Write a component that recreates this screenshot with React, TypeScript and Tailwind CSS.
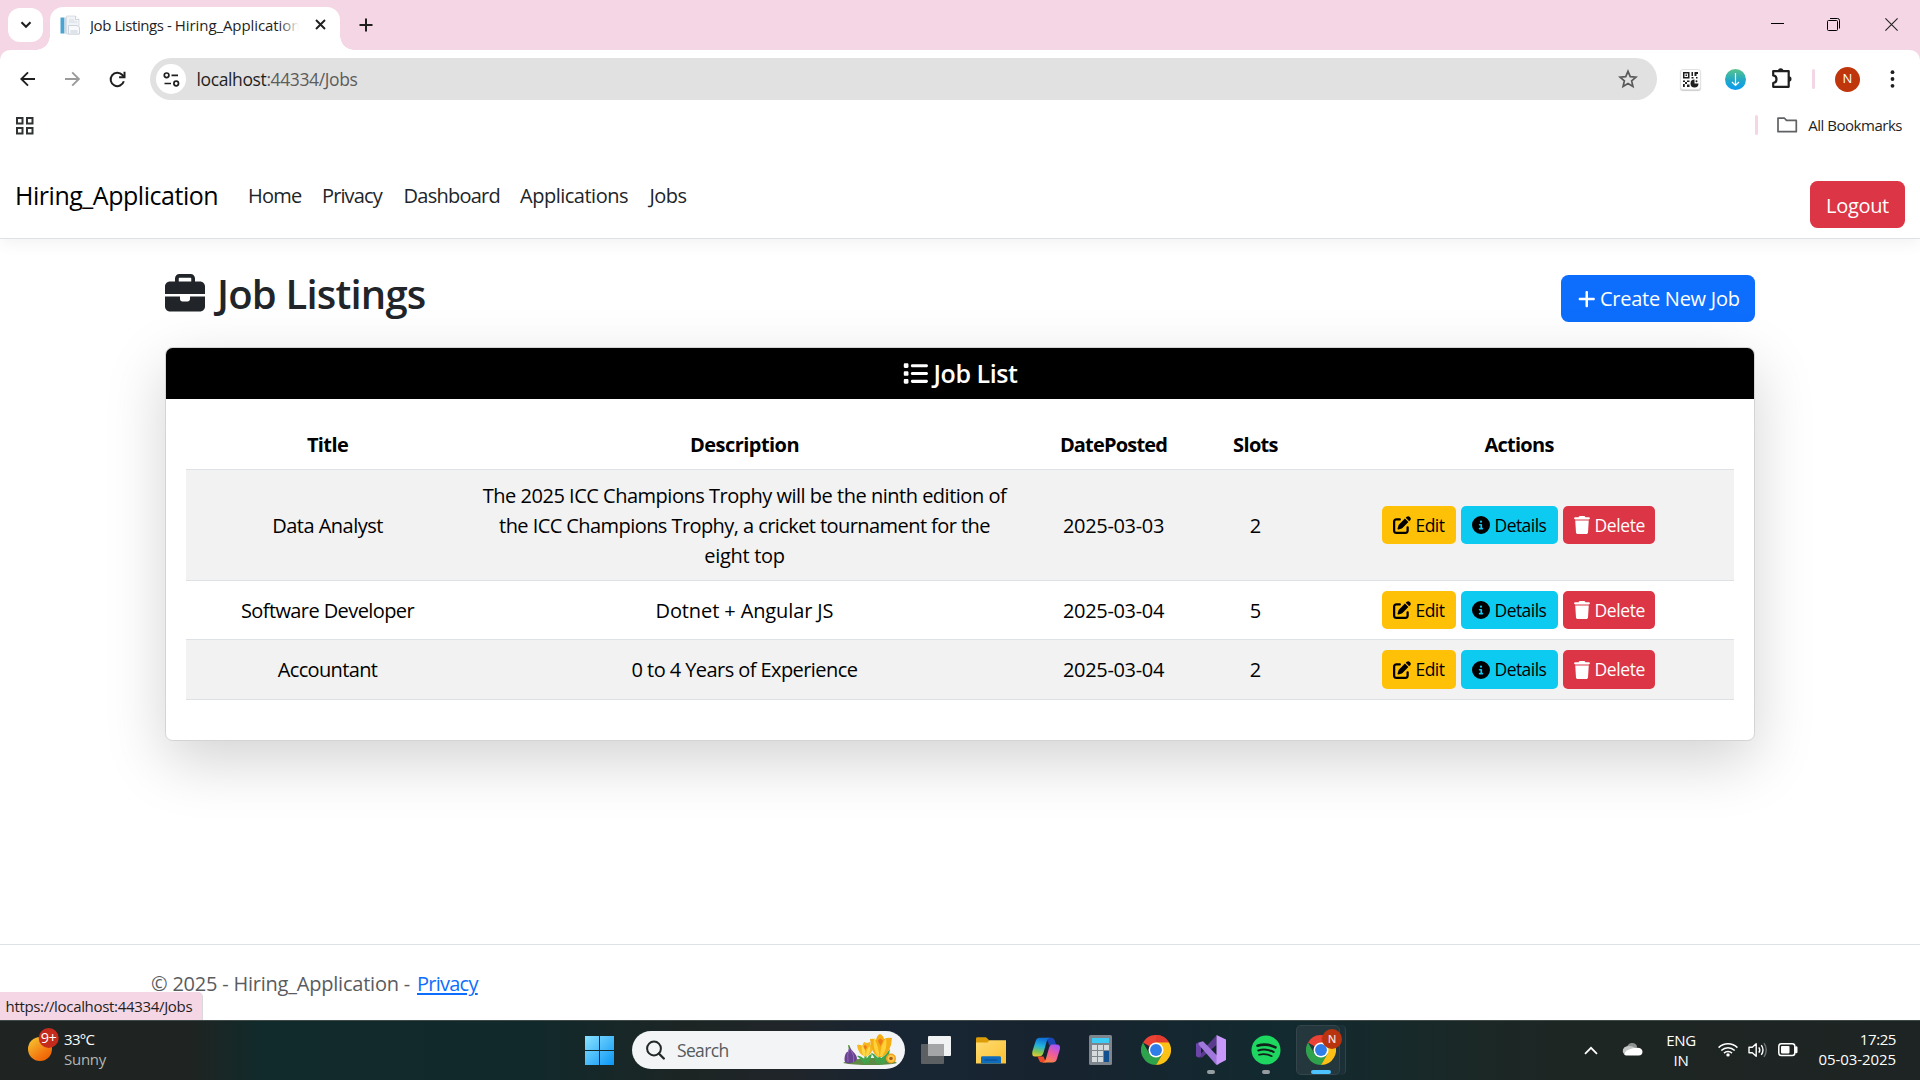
import React from "react";
import { FaBriefcase, FaCircleInfo, FaList, FaPenToSquare, FaPlus, FaTrash } from "react-icons/fa6";

function TabStrip() {
  return (
    <div className="flex h-[50px] bg-[#f5d6e4]">
      <button className="mt-2 ml-2 flex h-[34px] w-[35px] items-center justify-center rounded-[12px] bg-white">
        <svg width="12" height="8" viewBox="0 0 12 8" fill="none" stroke="#1f1f1f" strokeWidth="2.1" className="mb-px">
          <path d="M1.5 1.3 6 5.8l4.500-4.500" />
        </svg>
      </button>
      <div className="relative mt-[7px] ml-[7px] flex w-[290px] items-center rounded-t-[13px] bg-white pb-[8px]">
        <span className="absolute bottom-0 -left-[14px] h-[14px] w-[14px] bg-[radial-gradient(circle_at_0_0,transparent_13.500px,white_14px)]" />
        <span className="absolute -right-[14px] bottom-0 h-[14px] w-[14px] bg-[radial-gradient(circle_at_100%_0,transparent_13.500px,white_14px)]" />
        <svg width="20" height="20" viewBox="0 0 20 20" className="ml-[10px]">
          <rect x="0.500" y="2.500" width="4" height="16" fill="#4aa3d0" />
          <rect x="4.500" y="2.500" width="1.500" height="16" fill="#c4dcea" />
          <path d="M6.500 1h9l3.500 3.500V19H6.500z" fill="#f1f3f6" stroke="#d3d8df" strokeWidth="0.800" />
          <path d="M15.500 1v3.500H19" fill="#fff" stroke="#c3cad3" strokeWidth="0.800" />
          <path d="M9 5h5M9 7h8" stroke="#d3dae2" strokeWidth="0.900" />
          <path d="M8.500 10.500h8.500l2.500 2V19h-11z" fill="#f8f9fb" stroke="#c4cbd5" strokeWidth="0.800" />
          <path d="M10.500 15h7v3.500h-7z" fill="#dde3ea" />
        </svg>
        <div className="relative ml-[10px] w-[209px] overflow-hidden text-[15px] leading-[22px] whitespace-nowrap text-[#1f1f1f]">
          <span className="tracking-[-0.420px]">Job Listings - </span>
          <span className="tracking-[-0.080px]">Hiring_Application</span>
          <span className="absolute inset-y-0 right-0 w-5 bg-linear-to-r from-white/0 to-white" />
        </div>
        <svg width="11" height="11" viewBox="0 0 11 11" stroke="#1f1f1f" strokeWidth="1.900" className="ml-[15.500px]">
          <path d="M1 1l9 9M10 1l-9 9" />
        </svg>
      </div>
      <svg width="14" height="14" viewBox="0 0 14 14" stroke="#1f1f1f" strokeWidth="2" className="mt-[18px] ml-[19px]">
        <path d="M7 0.500v13M0.500 7h13" />
      </svg>
      <div className="ml-auto flex pt-[18px] pr-[22px]">
        <svg width="13" height="13" viewBox="0 0 13 13" stroke="#000" strokeWidth="1">
          <path d="M0 5.500h13" />
        </svg>
        <svg width="13" height="13" viewBox="0 0 13 13" fill="none" stroke="#000" strokeWidth="1" className="ml-[43px]">
          <rect x="0.500" y="2.500" width="10" height="10" rx="1" />
          <path d="M3 0.500h7.500a2 2 0 0 1 2 2V10.500" />
        </svg>
        <svg width="13" height="13" viewBox="0 0 13 13" stroke="#222" strokeWidth="1.100" className="ml-[45px]">
          <path d="M0.400 0.400l12.200 12.200M12.600 0.400 0.400 12.600" />
        </svg>
      </div>
    </div>
  );
}

function Toolbar() {
  return (
    <div className="relative z-10 bg-[#f5d6e4]">
      <div className="flex h-[58px] items-center rounded-t-[10px] bg-white">
        <svg width="16" height="16" viewBox="0 0 16 16" fill="none" stroke="#1f1f1f" strokeWidth="1.900" className="ml-5">
          <path d="M15 8H1.500M8 1.300 1.300 8l6.700 6.700" />
        </svg>
        <svg width="16" height="16" viewBox="0 0 16 16" fill="none" stroke="#9b9b9b" strokeWidth="1.900" className="ml-[29px]">
          <path d="M0 8h13.700M7.200 1.300 13.900 8l-6.700 6.700" />
        </svg>
        <svg width="17" height="17" viewBox="0 0 17 17" fill="none" stroke="#1f1f1f" strokeWidth="2" className="mr-px ml-[28px]">
          <path d="M14.800 10.200A6.700 6.700 0 1 1 13.400 4L15 5.700" />
          <path d="M15.500 0.800v5.400h-5.400" />
        </svg>
        <div className="ml-[23px] flex h-[42px] w-[1507px] items-center rounded-full bg-[#e1e1e1]">
          <div className="ml-[6px] flex h-[30px] w-[30px] items-center justify-center rounded-full bg-white">
            <svg width="17" height="15" viewBox="0 0 17 15" fill="none" stroke="#1f1f1f" strokeWidth="1.700">
              <circle cx="3.600" cy="3.300" r="2.300" />
              <path d="M8.500 3.300h6.500M1.500 11.500h6.500" />
              <circle cx="13.200" cy="11.500" r="2.300" />
            </svg>
          </div>
          <div className="ml-[10.500px] text-[17.5px] leading-6 tracking-[-0.380px] text-[#1f1f1f]">
            localhost<span className="text-[#5c5c5c]">:44334/Jobs</span>
          </div>
          <svg width="20" height="20" viewBox="0 0 20 20" fill="none" stroke="#5a5a5a" strokeWidth="1.700" strokeLinejoin="miter" className="mr-[19px] ml-auto">
            <path d="M10 2.300l2.250 5.300 5.750.5-4.360 3.780 1.310 5.620L10 14.500l-4.950 3 1.310-5.620L2 8.100l5.750-.5z" />
          </svg>
        </div>
        <div className="ml-[23px] flex h-[21px] w-[21px] items-center justify-center rounded-[3px] border border-[#e2e2e2] bg-white shadow-[0_1px_1px_#ccc]">
          <svg width="17" height="17" viewBox="0 0 17 17" fill="#1f1f1f" className="shrink-0">
            <path d="M1 1h6.500v6.500H1zM2.500 2.500v3.500H6V2.500z" fillRule="evenodd" />
            <path d="M3.500 3.500h1.600v1.600H3.500zM9.500 1H11v4H9.500zM12.500 1H16v2h-1.500v2h-2zM9.500 6h2v1.500h-2zM14 6h1.500v1.500H14zM1 9.500h2V11H1zM5 9.500h2.500v1.500H5zM3 11h2v2H3zM1 13h1.800v3H1zM5 13.500h2.500V16H5z" />
            <path d="M12.500 8.500v4H16.500a4 4 0 1 1-4-4z" />
            <circle cx="14.500" cy="10.300" r="1" />
          </svg>
        </div>
        <svg width="21" height="21" viewBox="0 0 21 21" className="ml-6">
          <defs>
            <linearGradient id="dl" x1="0" y1="0" x2="0" y2="1">
              <stop offset="0" stopColor="#5bc48b" />
              <stop offset="0.550" stopColor="#1fa8c8" />
              <stop offset="1" stopColor="#0a9bf5" />
            </linearGradient>
          </defs>
          <circle cx="10.500" cy="10.500" r="10.500" fill="url(#dl)" />
          <path d="M10.500 4v12.500M7 13l3.500 3.500L14 13" stroke="#fff" strokeWidth="1.200" fill="none" />
        </svg>
        <svg width="21" height="21" viewBox="0 0 21 21" className="mb-[2px] ml-[25px]">
          <path d="M2.200 3.200h15.500v15.600H2.200V15c2.200-.3 3.300-1.900 3.300-3.800S4.400 7.700 2.200 7.400z" fill="none" stroke="#1f1f1f" strokeWidth="2.200" strokeLinejoin="round" />
          <path d="M7 3a2.700 2.700 0 0 1 5.400 0zM17.800 8.300a2.700 2.700 0 0 1 0 5.400z" fill="#1f1f1f" />
        </svg>
        <span className="ml-5 h-5 w-[3px] rounded-full bg-[#f5d6e4]" />
        <span className="ml-5 flex h-[25px] w-[25px] items-center justify-center rounded-full bg-[#bf360c] text-[13px] text-white">N</span>
        <svg width="5" height="18" viewBox="0 0 5 18" fill="#1f1f1f" className="ml-[30px]">
          <circle cx="2.500" cy="2.200" r="1.900" />
          <circle cx="2.500" cy="9" r="1.900" />
          <circle cx="2.500" cy="15.800" r="1.900" />
        </svg>
      </div>
      <div className="flex h-[42px] items-start bg-white pt-2">
        <svg width="18" height="18" viewBox="0 0 18 18" fill="none" stroke="#303333" strokeWidth="2" className="mt-[0.500px] ml-4">
          <path d="M1 1h5.500v5.500H1zM11 1h5.500v5.500H11zM1 11h5.500v5.500H1zM11 11h5.500v5.500H11z" />
        </svg>
        <span className="mt-[-1px] ml-auto h-5 w-[3px] rounded-full bg-[#f5d6e4]" />
        <svg width="21" height="16" viewBox="0 0 21 16" fill="none" stroke="#5f6163" strokeWidth="1.700" strokeLinejoin="round" className="mt-px ml-[19px]">
          <path d="M1 1.200h6.500l2 2.200h9.800v11.300H1z" />
        </svg>
        <span className="mt-[-2px] mr-[18px] ml-[10px] text-[15px] leading-[22px] tracking-[-0.480px] text-[#1f1f1f]">All Bookmarks</span>
      </div>
    </div>
  );
}

function SiteHeader() {
  return (
    <header className="flex h-[89px] items-center border-b border-[#dee2e6] bg-white pt-[3px] pr-[15px] pl-[15px] text-[20px] text-[#212529] shadow-[0_5px_15px_rgba(0,0,0,0.05)]">
      <span className="w-[233px] pb-px text-[25px] leading-8 tracking-[-0.470px] text-black">Hiring_Application</span>
      <span className="w-[74px] tracking-[-0.760px]">Home</span>
      <span className="w-[81.500px] tracking-[-0.880px]">Privacy</span>
      <span className="w-[116.500px] tracking-[-0.740px]">Dashboard</span>
      <span className="w-[129.500px] tracking-[-0.490px]">Applications</span>
      <span className="tracking-[-0.550px]">Jobs</span>
      <button className="mb-[10px] ml-auto flex h-[47px] w-[95px] items-center justify-center self-end rounded-[7.5px] bg-[#dc3545] pt-[2px] tracking-[-0.330px] text-white">
        Logout
      </button>
    </header>
  );
}

const jobs = [
  { title: "Data Analyst", date: "2025-03-03", slots: 2 },
  { title: "Software Developer", date: "2025-03-04", slots: 5 },
  { title: "Accountant", date: "2025-03-04", slots: 2 },
];

function Description({ row }: { row: number }) {
  if (row === 0)
    return (
      <div className="leading-[30px] whitespace-nowrap">
        <div className="tracking-[-0.490px]">The 2025 ICC Champions Trophy will be the ninth edition of</div>
        <div className="tracking-[-0.570px]">the ICC Champions Trophy, a cricket tournament for the</div>
        <div className="tracking-[-0.300px]">eight top</div>
      </div>
    );
  if (row === 1) return <span className="tracking-[-0.110px]">Dotnet + Angular JS</span>;
  return <span className="tracking-[-0.570px]">0 to 4 Years of Experience</span>;
}

const rowStyles = ["h-[111px] bg-[#f2f2f2]", "h-[59px]", "h-[60px] bg-[#f2f2f2]"];
const textStyles = ["pt-[2px]", "pt-[2px]", "pt-0"];
const buttonStyles = ["h-[38px]", "h-[38px]", "h-[39px]"];
const titleTracking = ["tracking-[-0.520px]", "tracking-[-0.590px]", "tracking-[-0.650px]"];

function JobTable() {
  return (
    <table className="w-[1548px] table-fixed border-separate border-spacing-0 text-center text-[20px] text-black [&_td]:border-b [&_td]:border-[#dee2e6] [&_th]:border-b [&_th]:border-[#dee2e6] [&_th]:pt-[2px]">
      <colgroup>
        <col className="w-[283px]" />
        <col className="w-[551px]" />
        <col className="w-[187px]" />
        <col className="w-[97px]" />
        <col className="w-[430px]" />
      </colgroup>
      <thead>
        <tr className="h-[51px] font-bold">
          <th className="tracking-[-0.620px]">Title</th>
          <th className="tracking-[-0.540px]">Description</th>
          <th className="tracking-[-0.820px]">DatePosted</th>
          <th className="tracking-[-0.670px]">Slots</th>
          <th className="tracking-[-0.730px]">Actions</th>
        </tr>
      </thead>
      <tbody>
        {jobs.map((job, i) => (
          <tr key={job.title} className={rowStyles[i]}>
            <td className={textStyles[i] + " " + titleTracking[i]}>{job.title}</td>
            <td className={textStyles[i]}>
              <Description row={i} />
            </td>
            <td className={"tracking-[-0.320px] " + textStyles[i]}>{job.date}</td>
            <td className={textStyles[i]}>{job.slots}</td>
            <td>
              <div className="flex justify-center gap-[5px] pr-[2px] text-[17.5px]">
                <button className={"flex w-[74px] items-center rounded-[5px] bg-[#ffc107] pl-[11px] tracking-[-0.550px] " + buttonStyles[i]}>
                  <FaPenToSquare className="mr-[5px] h-[18px] w-[18px]" />
                  Edit
                </button>
                <button className={"flex w-[97px] items-center rounded-[5px] bg-[#0dcaf0] pl-[11px] tracking-[-0.550px] " + buttonStyles[i]}>
                  <FaCircleInfo className="mr-[5px] h-[18px] w-[18px]" />
                  Details
                </button>
                <button className={"flex w-[92px] items-center rounded-[5px] bg-[#dc3545] pl-[11px] tracking-[-0.400px] text-white " + buttonStyles[i]}>
                  <FaTrash className="mr-[5px] h-[18px] w-4" />
                  Delete
                </button>
              </div>
            </td>
          </tr>
        ))}
      </tbody>
    </table>
  );
}

function PageBody() {
  return (
    <main className="flex h-[705px] flex-col px-[165px] pt-9">
      <div className="flex h-[72px] items-start justify-between">
        <h2 className="mt-px flex h-[36px] items-center text-[40px] font-semibold tracking-[-0.800px] text-[#212529]">
          <FaBriefcase className="mr-[12px] h-10 w-10" />
          Job Listings
        </h2>
        <button className="flex h-[47px] w-[194px] items-center rounded-[7.5px] bg-[#0d6efd] pl-[17px] text-[20px] tracking-[-0.260px] text-white">
          <FaPlus className="mr-[4.500px] h-5 w-[17.5px]" />
          Create New Job
        </button>
      </div>
      <section className="h-[394px] w-[1590px] rounded-[7.5px] border border-[#d3d4d4] bg-white shadow-[0_20px_60px_rgba(0,0,0,0.175)]">
        <h5 className="flex h-[51px] items-center justify-center rounded-t-[6.5px] bg-black text-[25px] font-semibold tracking-[-0.450px] text-white">
          <FaList className="mr-[6px] h-[25px] w-[25px]" />
          Job List
        </h5>
        <div className="p-5">
          <JobTable />
        </div>
      </section>
    </main>
  );
}

function PageFooter() {
  return (
    <footer className="relative flex h-[76px] items-start border-t border-[#dee2e6] bg-white pt-6 pl-[151px] text-[20px] leading-[30px] text-[#595c5f]">
      <span className="w-[266px] tracking-[-0.220px]">© 2025 - Hiring_Application -</span>
      <a className="tracking-[-0.750px] text-[#0d6efd] underline underline-offset-2">Privacy</a>
      <div className="absolute bottom-0 left-0 h-7 w-[203px] rounded-tr-[5px] border-r border-[#d9d9dc] bg-[#f5d6e4] pl-[5.500px] text-[15px] leading-[28px] tracking-[-0.320px] text-[#1f1f1f]">
        https://localhost:44334/Jobs
      </div>
    </footer>
  );
}

function ChromeIcon() {
  return (
    <svg width="30" height="30" viewBox="0 0 48 48">
      <path d="M24 24 3.200 12A24 24 0 0 1 44.800 12z" fill="#ea4335" />
      <path d="M24 0A24 24 0 0 1 44.800 12H24z" fill="#e33b2e" />
      <path d="M3.200 12A24 24 0 0 0 24 48L34.400 30 24 24 13.600 30z" fill="#2fa24c" />
      <path d="M44.800 12A24 24 0 0 1 24 48L34.400 30 24 12z" fill="#fbc116" />
      <circle cx="24" cy="24" r="12" fill="#fff" />
      <circle cx="24" cy="24" r="9.500" fill="#2f7de9" />
    </svg>
  );
}

function Flowers() {
  return (
    <svg width="56" height="32" viewBox="0 0 56 32">
      <path d="M0 29Q6 25 28 24Q48 23 54 29Q46 31 28 31T0 29z" fill="#5f8a45" />
      <path d="M6 11q1.500 4 4 6.500 4 4 4 7T7.500 29 1.500 24.500 5 17.500Q6.500 15 6 11z" fill="#6a4292" />
      <path d="M6 15q-2 5-1 13M8 16q4 6 2.500 12" stroke="#9a72bd" fill="none" strokeWidth="0.800" />
      <path d="M5.500 11l.8 5" stroke="#5f9a45" strokeWidth="1" />
      <path d="M22 26q-5-5-8-4 5 4 8 9zM23 26q3-6 6-6-1 5-4 10zM36 25q-6-7-8-6 5 6 6 12zM37 25q6-4 10-10-1 11-8 16z" fill="#3fa44a" />
      <path d="M22.500 20v10M36.500 21v9" stroke="#3fa44a" strokeWidth="2.200" />
      <path d="M14 11q3-1 5 1l2-4 3 1 3-1 1 4h2q0 8-7.500 11Q15 20 14 11z" fill="#f6b820" />
      <path d="M20.500 22q-3-6-1-11 3 4 3 11zM24.500 22q4-5 2-10-3 3-3.500 10z" fill="#ffd84a" />
      <path d="M20.500 13q1.500-4 3.500 0l-1.500 3z" fill="#ef7b1a" />
      <path d="M27 5q4-1 6 1 1-5 4-6 3 1 4 5 4-2 8-1-1 15-10 19h-4Q28 19 27 5z" fill="#f5ad12" />
      <path d="M35 22.500Q29 14 31 4q4 6 5.500 18zM39 22.500q6-8 4-18.500-5 6-6 18z" fill="#ffd23d" />
      <path d="M35 7q2-5 5 0l-2.500 5z" fill="#ef7b1a" />
      <circle cx="48" cy="24.500" r="5" fill="#f0a321" />
      <circle cx="48" cy="24.500" r="3.500" fill="#ffc94a" />
      <circle cx="48" cy="24.500" r="1.800" fill="#a8611c" />
    </svg>
  );
}

function Taskbar() {
  return (
    <div className="flex h-[60px] items-start border-t border-[#3f4a48] bg-[linear-gradient(90deg,#1f2422_0px,#1f2422_190px,#112a2b_260px,#12292b_540px,#1d2524_690px,#20252a_790px,#182533_900px,#17242f_1080px,#122a30_1290px,#1b2826_1480px,#1e2624_1560px,#1d2423_1920px)] text-[15px] leading-5 text-white">
      <div className="flex w-[585px] pt-[13px]">
        <svg width="34" height="36" viewBox="0 0 34 36" className="mt-[-6px] ml-[27px]">
          <defs>
            <linearGradient id="sun" x1="0.100" y1="0.100" x2="0.800" y2="1">
              <stop offset="0" stopColor="#f5c02f" />
              <stop offset="0.700" stopColor="#f3750f" />
              <stop offset="1" stopColor="#ea6100" />
            </linearGradient>
          </defs>
          <circle cx="13" cy="21" r="12" fill="url(#sun)" />
          <circle cx="21.700" cy="10" r="10" fill="#c42b1c" />
          <text x="21.500" y="15" textAnchor="middle" fill="#fff" fontSize="14.500" letterSpacing="-0.500">9+</text>
        </svg>
        <div className="ml-[3px]">
          <div className="h-5 leading-[10px] tracking-[-0.660px]">33°C</div>
          <div className="h-5 leading-[10px] tracking-[-0.250px] text-[#b4b6b6]">Sunny</div>
        </div>
      </div>
      <svg width="29" height="29" viewBox="0 0 29 29" className="mt-[15px]">
        <defs>
          <linearGradient id="win" x1="0" y1="0" x2="1" y2="1">
            <stop offset="0" stopColor="#8ae2ff" />
            <stop offset="1" stopColor="#0a96f5" />
          </linearGradient>
        </defs>
        <path d="M0 0h14v14H0zM15 0h14v14H15zM0 15h14v14H0zM15 15h14v14H15z" fill="url(#win)" />
      </svg>
      <div className="mt-[10px] ml-[18px] flex h-[38px] w-[273px] items-center rounded-full bg-[#f2f4f5] text-[#555b5d]">
        <svg width="19" height="20" viewBox="0 0 19 20" fill="none" stroke="#222827" strokeWidth="2" className="ml-[14px]">
          <circle cx="8" cy="8.500" r="6.900" />
          <path d="M12.800 13.500l5 5" strokeLinecap="round" strokeWidth="2.400" />
        </svg>
        <span className="ml-[12px] text-[17.5px] tracking-[-0.660px]">Search</span>
        <div className="mr-[6px] ml-auto">
          <Flowers />
        </div>
      </div>
      <svg width="30" height="29" viewBox="0 0 30 29" className="mt-[15px] ml-4">
        <rect y="8" width="23" height="20" rx="1" fill="#5c6062" />
        <rect x="7" y="0" width="23" height="20" rx="1" fill="#f1f2f3" />
        <rect x="7" y="8" width="16" height="12" fill="#a3a5a6" />
      </svg>
      <svg width="30" height="27" viewBox="0 0 30 27" className="mt-4 ml-[25px]">
        <defs>
          <linearGradient id="fold" x1="0" y1="0" x2="1" y2="1">
            <stop offset="0" stopColor="#ffdc73" />
            <stop offset="1" stopColor="#fbc130" />
          </linearGradient>
        </defs>
        <path d="M0 1.500Q0 .2 1.500.2h8.500L13.500 3.400V8H0z" fill="#dd9d09" />
        <path d="M0 5.500h11.500l2-2.200H30V26.500H0z" fill="url(#fold)" />
        <path d="M5 26.500v-6q0-1.300 1.500-1.300h17q1.500 0 1.500 1.300v6z" fill="#0f6cbd" />
        <path d="M8.500 23h13" stroke="#0b4e8f" strokeWidth="1.200" />
      </svg>
      <svg width="30" height="27" viewBox="0 0 30 27" className="mt-4 ml-[25px]">
        <defs>
          <linearGradient id="cp1" x1="0.300" y1="0" x2="0.100" y2="1">
            <stop offset="0" stopColor="#0f74d8" />
            <stop offset="0.400" stopColor="#22b4dd" />
            <stop offset="0.700" stopColor="#7cc558" />
            <stop offset="1" stopColor="#f2c92c" />
          </linearGradient>
          <linearGradient id="cp2" x1="0.700" y1="0" x2="0.200" y2="1">
            <stop offset="0" stopColor="#a655f7" />
            <stop offset="0.450" stopColor="#ee5aa0" />
            <stop offset="1" stopColor="#fb8a3c" />
          </linearGradient>
        </defs>
        <path d="M16 .8h4.500q2.500 0 3.300 2.700l1.400 4.700H18z" fill="#1b48b5" />
        <path d="M8.700.8H19q-2.500.6-3.400 4l-3.100 11q-1 3.700-4.500 3.700H4Q.2 19.500 1.500 14L4.700 4Q5.700.8 8.700.8z" fill="url(#cp1)" />
        <path d="M6.500 19.500h6L15 25.500h-4q-2.300 0-3-2.500z" fill="#ee4a2c" />
        <path d="M21 7.500h4.500q4.500 0 3.300 5l-3 9.800q-1 3.200-4.300 3.200H11.500q2.600-.5 3.500-4l3-10.500q1-3.500 3-3.500z" fill="url(#cp2)" />
      </svg>
      <svg width="23" height="30" viewBox="0 0 23 30" className="mt-[14px] ml-7">
        <rect width="23" height="30" rx="1.500" fill="#7e858c" />
        <rect x="3" y="3" width="17" height="5" fill="#3cccf5" />
        <path d="M3 10h5v5H3zM9 10h5v5H9zM15 10h5v5h-5zM3 16h5v5H3zM9 16h5v5H9zM3 22h5v5H3zM9 22h5v5H9z" fill="#d5dadd" />
        <path d="M15 16h5v11h-5z" fill="#12508f" />
      </svg>
      <div className="mt-[14px] ml-[29px]">
        <ChromeIcon />
      </div>
      <div className="mt-[14px] ml-[25px] flex w-[30px] flex-col items-center">
        <svg width="30" height="30" viewBox="0 0 30 30">
          <path d="M0 8.500 2.500 7.500 8.500 13 20.500 0.500V10L6 22.500 2.500 22.500 0 21z" fill="#593a8c" />
          <path d="M0 8.500v12.500l2.500 1.500 2.500-2V11z" fill="#6c45a8" />
          <path d="M5 11.800 8.700 15 5 18.500z" fill="#17242f" />
          <path d="M20.500 10.500V19.500L15 15z" fill="#17242f" />
          <path d="M2.500 7.500 7 6.200 22.500 22v7.500H20L2.500 9.500z" fill="#a077dc" />
          <path d="M20.500 0 30 4.500v20.500L20.500 30z" fill="#c898fa" />
        </svg>
        <span className="mt-[5px] h-1 w-2 rounded-full bg-[#969da0]" />
      </div>
      <div className="mt-[14px] ml-[25px] flex w-[30px] flex-col items-center">
        <svg width="30" height="30" viewBox="0 0 30 30" fill="none" stroke="#11201a" strokeLinecap="round">
          <circle cx="15" cy="15" r="14.500" fill="#1ed760" stroke="none" />
          <path d="M6.500 10.700q9.500-2.700 18 1.700" strokeWidth="2.600" />
          <path d="M7.300 15.400q8-2.300 15.300 1.600" strokeWidth="2.100" />
          <path d="M8 19.700q7-1.800 12.800 1.500" strokeWidth="1.700" />
        </svg>
        <span className="mt-[5px] h-1 w-2 rounded-full bg-[#969da0]" />
      </div>
      <div className="mt-[4px] ml-[15px] h-[50px] w-[50px] rounded-[5px] border-r border-[#334044] bg-[#1b3036]">
        <div className="relative h-[50px] w-[44px] rounded-[5px] border border-[#33444a] bg-[#24373c]">
          <span className="absolute top-[9px] left-[9px]">
            <ChromeIcon />
          </span>
          <span className="absolute top-[3px] left-[25px] flex h-5 w-5 items-center justify-center rounded-full bg-[#b8340e] text-[11px] font-semibold text-[#f3ddd6]">N</span>
          <span className="absolute bottom-0 left-[14px] h-1 w-5 rounded-full bg-[#4cc2ff]" />
        </div>
      </div>
      <div className="mr-[24px] ml-auto flex">
        <svg width="14" height="9" viewBox="0 0 14 9" fill="none" stroke="#fff" strokeWidth="1.700" className="mt-[25px]">
          <path d="M1 7.800 7 1.800l6 6" />
        </svg>
        <svg width="21" height="14" viewBox="0 0 21 14" className="mt-[21px] ml-[24px]">
          <path d="M5 5.500A5.300 5.300 0 0 1 15 4l-1 6H5z" fill="#8e9291" />
          <path d="M4.800 4.300A4.600 4.600 0 0 0 2 12L13.500 6Q9 3 4.800 4.300z" fill="#c6c8c8" />
          <path d="M2 12.200Q4 7.500 12 6q8-1.500 8.500 3.500 0 4-4 4H4.500Q3 13.500 2 12.200z" fill="#fff" />
        </svg>
        <div className="ml-[22px] w-[32px] pt-[9px] text-center tracking-[-0.300px]">
          <div>ENG</div>
          <div>IN</div>
        </div>
        <svg width="20" height="15" viewBox="0 0 20 15" fill="none" stroke="#fff" strokeWidth="1.500" className="mt-[21px] ml-[21px]">
          <path d="M0.600 5.600a13.300 13.300 0 0 1 18.800 0M3.300 8.500a9.500 9.500 0 0 1 13.400 0M6 11.100a5.700 5.700 0 0 1 8 0" />
          <circle cx="10" cy="12.900" r="1.700" fill="#fff" stroke="none" />
        </svg>
        <svg width="20" height="16" viewBox="0 0 20 16" fill="none" stroke="#fff" strokeWidth="1.400" className="mt-[21px] ml-[10px]">
          <path d="M1 5.300h3.300L8.200 1.800v12.400l-3.900-3.500H1z" strokeLinejoin="round" />
          <path d="M10.800 5.300q2 2.700 0 5.400M13.300 3.200q3.400 4.800 0 9.600" />
          <path d="M16 1.200q4.500 6.800 0 13.600" stroke="#6c7271" />
        </svg>
        <svg width="20" height="14" viewBox="0 0 20 14" fill="none" stroke="#fff" strokeWidth="1.500" className="mt-[22px] ml-[10px]">
          <rect x="0.800" y="0.800" width="16" height="11.800" rx="2.500" />
          <rect x="3" y="3" width="8.500" height="7.400" rx="0.800" fill="#fff" stroke="none" />
          <path d="M18.200 4.500v4.500" strokeWidth="2.600" strokeLinecap="round" />
        </svg>
        <div className="ml-[19px] w-[79px] pt-[8px] text-right">
          <div className="tracking-[-0.420px]">17:25</div>
          <div className="tracking-[-0.080px]">05-03-2025</div>
        </div>
      </div>
    </div>
  );
}

export default function App() {
  return (
    <div className="flex h-[1080px] w-[1920px] flex-col overflow-hidden bg-white font-['Open_Sans',sans-serif]">
      <TabStrip />
      <Toolbar />
      <SiteHeader />
      <PageBody />
      <PageFooter />
      <Taskbar />
    </div>
  );
}
